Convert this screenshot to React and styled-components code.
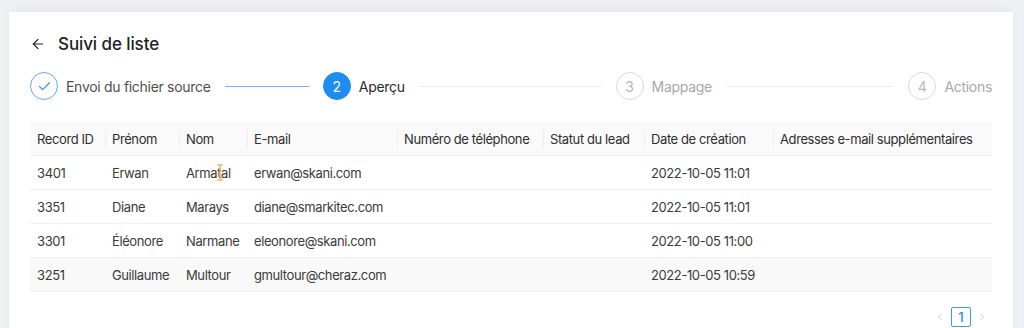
import React from "react";
import styled, { createGlobalStyle } from "styled-components";

const GlobalStyle = createGlobalStyle`
  html, body {
    margin: 0;
    padding: 0;
    background-color: #eff0f4;
    font-family: Inter, "Noto Sans", "Liberation Sans", sans-serif;
    -webkit-font-smoothing: antialiased;
  }
`;

const Page = styled.div`
  padding: 12px 11px 0 9px;
  height: 316px;
  overflow: hidden;
`;

const Card = styled.div`
  background-color: #fff;
  padding: 20px 21px 0 21px;
  height: 100%;
  box-shadow: 0 -4px 10px rgba(40, 44, 60, 0.03);
`;

const TitleRow = styled.div`
  display: flex;
  align-items: center;
  height: 24px;
  gap: 12px;
`;

const BackButton = styled.span`
  display: flex;
  align-items: center;
  width: 16px;
  height: 16px;
  color: #262626;
  cursor: pointer;
`;

const Title = styled.h1`
  margin: 0;
  font-size: 17px;
  font-weight: 500;
  color: #1f1f1f;
  letter-spacing: -0.1px;
`;

const Steps = styled.div`
  display: flex;
  align-items: center;
  margin-top: 16px;
  height: 28px;
`;

const Step = styled.div`
  display: flex;
  align-items: center;
  flex: ${(p) => (p.last ? "none" : "1")};
  min-width: 0;
`;

const Circle = styled.span`
  flex: none;
  width: 26px;
  height: 26px;
  border-radius: 50%;
  display: flex;
  align-items: center;
  justify-content: center;
  font-size: 14px;
  border: 1px solid
    ${(p) =>
      p.state === "done" ? "#62a9f4" : p.state === "active" ? "#1d8cf3" : "#d9d9d9"};
  background-color: ${(p) => (p.state === "active" ? "#1d8cf3" : "#fff")};
  color: ${(p) =>
    p.state === "done" ? "#3f95ee" : p.state === "active" ? "#fff" : "#b8b8b8"};
`;

const StepLabel = styled.span`
  margin-left: 8px;
  font-size: 14px;
  letter-spacing: -0.3px;
  white-space: nowrap;
  color: ${(p) =>
    p.state === "done" ? "#4f4f4f" : p.state === "active" ? "#2b2b2b" : "#a8a8a8"};
`;

const Connector = styled.span`
  flex: 1;
  height: 1px;
  margin: 0 14px;
  background-color: ${(p) => (p.done ? "#72b4f6" : "#ececec")};
`;

const Table = styled.table`
  margin-top: 22px;
  width: 100%;
  border-collapse: collapse;
  table-layout: fixed;
  font-size: 13px;
  letter-spacing: -0.4px;
`;

const HeadCell = styled.th`
  position: relative;
  height: 33px;
  padding: 0 7px;
  text-align: left;
  font-weight: 400;
  color: #2e2e2e;
  background-color: #fafafa;
  border-bottom: 1px solid #f0f0f0;
  white-space: nowrap;
  overflow: hidden;
  &:not(:first-child)::before {
    content: "";
    position: absolute;
    left: 0;
    top: 50%;
    width: 1px;
    height: 18px;
    transform: translateY(-50%);
    background-color: #ececec;
  }
`;

const Row = styled.tr`
  background-color: ${(p) => (p.hover ? "#f9f9f9" : "#fff")};
`;

const Cell = styled.td`
  position: relative;
  height: 33px;
  padding: 0 7px;
  color: #3a3a3a;
  border-bottom: 1px solid #f0f0f0;
  white-space: nowrap;
  overflow: hidden;
`;

const TextCursor = styled.span`
  position: absolute;
  left: 38px;
  top: 8px;
  width: 6px;
  height: 17px;
  color: #f0b34a;
`;

const Pagination = styled.div`
  display: flex;
  justify-content: flex-end;
  align-items: center;
  gap: 4px;
  margin-top: 15px;
  padding-right: 3px;
`;

const PageArrow = styled.span`
  display: flex;
  align-items: center;
  justify-content: center;
  width: 14px;
  height: 20px;
  color: #c4c4c4;
`;

const PageItem = styled.span`
  display: flex;
  align-items: center;
  justify-content: center;
  width: 18px;
  height: 18px;
  border: 1px solid #3e98f2;
  border-radius: 2px;
  font-size: 13px;
  font-weight: 500;
  color: #2a8bf0;
`;

const columns = [
  { label: "Record ID", width: 75 },
  { label: "Prénom", width: 74 },
  { label: "Nom", width: 68 },
  { label: "E-mail", width: 150 },
  { label: "Numéro de téléphone", width: 146 },
  { label: "Statut du lead", width: 101 },
  { label: "Date de création", width: 129 },
  { label: "Adresses e-mail supplémentaires", width: 219 },
];

const rows = [
  ["3401", "Erwan", "Armatal", "erwan@skani.com", "", "", "2022-10-05 11:01", ""],
  ["3351", "Diane", "Marays", "diane@smarkitec.com", "", "", "2022-10-05 11:01", ""],
  ["3301", "Éléonore", "Narmane", "eleonore@skani.com", "", "", "2022-10-05 11:00", ""],
  ["3251", "Guillaume", "Multour", "gmultour@cheraz.com", "", "", "2022-10-05 10:59", ""],
];

const steps = [
  { label: "Envoi du fichier source", state: "done" },
  { label: "Aperçu", state: "active" },
  { label: "Mappage", state: "wait" },
  { label: "Actions", state: "wait" },
];

function StepIcon({ index, state }) {
  if (state === "done") {
    return (
      <svg width="15" height="15" viewBox="0 0 24 24" fill="none" stroke="currentColor" strokeWidth="2" strokeLinecap="round" strokeLinejoin="round">
        <path d="M20 6 9 17l-5-5" />
      </svg>
    );
  }
  return index + 1;
}

export default function App() {
  return (
    <>
      <GlobalStyle />
      <Page>
        <Card>
          <TitleRow>
            <BackButton>
              <svg width="16" height="16" viewBox="0 0 24 24" fill="none" stroke="currentColor" strokeWidth="1.8" strokeLinecap="round" strokeLinejoin="round">
                <path d="m12 19-7-7 7-7" />
                <path d="M19 12H5" />
              </svg>
            </BackButton>
            <Title>Suivi de liste</Title>
          </TitleRow>

          <Steps>
            {steps.map((s, i) => {
              const last = i === steps.length - 1;
              return (
                <Step key={s.label} last={last}>
                  <Circle state={s.state}>
                    <StepIcon index={i} state={s.state} />
                  </Circle>
                  <StepLabel state={s.state}>{s.label}</StepLabel>
                  {!last && <Connector done={s.state === "done"} />}
                </Step>
              );
            })}
          </Steps>

          <Table>
            <colgroup>
              {columns.map((c) => (
                <col key={c.label} style={{ width: c.width }} />
              ))}
            </colgroup>
            <thead>
              <tr>
                {columns.map((c) => (
                  <HeadCell key={c.label}>{c.label}</HeadCell>
                ))}
              </tr>
            </thead>
            <tbody>
              {rows.map((r, ri) => (
                <Row key={r[0]} hover={ri === rows.length - 1}>
                  {r.map((v, ci) => (
                    <Cell key={ci}>
                      {v}
                      {ri === 0 && ci === 2 && (
                        <TextCursor>
                          <svg width="6" height="17" viewBox="0 0 6 17" fill="none" stroke="currentColor" strokeWidth="1.3">
                            <path d="M0.5 1h5M3 1v15M0.5 16h5" />
                          </svg>
                        </TextCursor>
                      )}
                    </Cell>
                  ))}
                </Row>
              ))}
            </tbody>
          </Table>

          <Pagination>
            <PageArrow>
              <svg width="12" height="12" viewBox="0 0 24 24" fill="none" stroke="currentColor" strokeWidth="1.8">
                <path d="m15 18-6-6 6-6" />
              </svg>
            </PageArrow>
            <PageItem>1</PageItem>
            <PageArrow>
              <svg width="12" height="12" viewBox="0 0 24 24" fill="none" stroke="currentColor" strokeWidth="1.8">
                <path d="m9 18 6-6-6-6" />
              </svg>
            </PageArrow>
          </Pagination>
        </Card>
      </Page>
    </>
  );
}
